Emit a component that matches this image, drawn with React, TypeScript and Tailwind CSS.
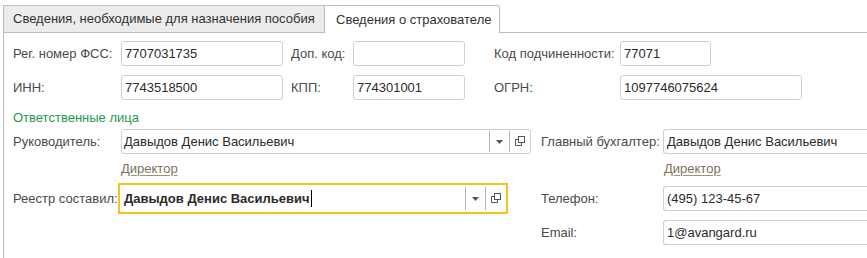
import React from "react";

const font = { fontFamily: '"Liberation Sans", Arial, sans-serif' };

function Field({ value, w, grow }: { value: string; w?: string; grow?: boolean }) {
  return (
    <div
      className={`h-[25px] border border-[#cfcfcf] rounded-[3px] bg-white flex items-center px-[3px] text-[#2b2b2b] whitespace-nowrap overflow-hidden ${
        grow ? "flex-1 rounded-r-none border-r-0" : ""
      } ${w ?? ""}`}
    >
      {value}
    </div>
  );
}

function OpenIcon() {
  return (
    <svg width="11" height="11" viewBox="0 0 11 11" fill="none" stroke="#555" strokeWidth="1">
      <rect x="3.5" y="0.5" width="6" height="6" />
      <path d="M3.5 3.5H0.5V9.5H6.5V6.5" />
    </svg>
  );
}

function Buttons() {
  return (
    <div className="flex h-full items-stretch">
      <div className="w-[20px] border-l border-[#b4b4b4] my-[1px] flex items-center justify-center">
        <svg width="7" height="4" viewBox="0 0 7 4">
          <path d="M0 0H7L3.5 4Z" fill="#555" />
        </svg>
      </div>
      <div className="w-[21px] border-l border-[#b4b4b4] my-[1px] flex items-center justify-center">
        <OpenIcon />
      </div>
    </div>
  );
}

function Label({ text, w }: { text: string; w: string }) {
  return <div className={`${w} shrink-0 text-[#4a4a4a] whitespace-nowrap`}>{text}</div>;
}

function Link({ text }: { text: string }) {
  return <span className="text-[#7b7260] underline underline-offset-2 decoration-[#9a917f]">{text}</span>;
}

export default function App() {
  return (
    <div className="w-[867px] h-[258px] bg-white overflow-hidden text-[13px] leading-[16px]" style={font}>
      {/* tabs */}
      <div className="flex pt-[5px] pl-[3px]">
        <div className="w-[322px] h-[28px] bg-[#ececec] border border-[#bdbdbd] flex items-center pl-[9px] text-[#333] whitespace-nowrap">
          Сведения, необходимые для назначения пособия
        </div>
        <div className="w-[175px] h-[28px] bg-white border border-l-0 border-b-0 border-[#bdbdbd] rounded-tr-[3px] flex items-center pl-[11px] text-[#333] whitespace-nowrap">
          Сведения о страхователе
        </div>
        <div className="flex-1 h-[28px] border-b border-[#bdbdbd]" />
      </div>

      {/* panel */}
      <div className="ml-[3px] h-[226px] border-l border-[#bdbdbd] pl-[9px] pt-[8px]">
        <div className="flex items-center">
          <Label text="Рег. номер ФСС:" w="w-[108px]" />
          <Field value="7707031735" w="w-[162px]" />
          <div className="w-[8px]" />
          <Label text="Доп. код:" w="w-[62px]" />
          <Field value="" w="w-[112px]" />
          <div className="w-[29px]" />
          <Label text="Код подчиненности:" w="w-[126px]" />
          <Field value="77071" w="w-[91px]" />
        </div>
        <div className="flex items-center mt-[9px]">
          <Label text="ИНН:" w="w-[108px]" />
          <Field value="7743518500" w="w-[162px]" />
          <div className="w-[8px]" />
          <Label text="КПП:" w="w-[62px]" />
          <Field value="774301001" w="w-[112px]" />
          <div className="w-[29px]" />
          <Label text="ОГРН:" w="w-[126px]" />
          <Field value="1097746075624" w="w-[182px]" />
        </div>

        <div className="mt-[10px] h-[19px] text-[#1e9a4d]">Ответственные лица</div>

        <div className="flex">
          {/* left column */}
          <div className="w-[528px] shrink-0">
            <div className="flex items-center">
              <Label text="Руководитель:" w="w-[108px]" />
              <div className="w-[410px] h-[25px] border border-[#cfcfcf] rounded-[3px] flex items-center">
                <div className="flex-1 px-[2px] text-[#2b2b2b] whitespace-nowrap">Давыдов Денис Васильевич</div>
                <Buttons />
              </div>
            </div>
            <div className="h-[29px] flex items-center pl-[108px]">
              <Link text="Директор" />
            </div>
            <div className="flex items-center">
              <Label text="Реестр составил:" w="w-[105px]" />
              <div className="w-[390px] h-[31px] border-2 border-[#f4c31c] flex items-center">
                <div className="flex-1 pl-[4px] font-bold text-[#2b2b2b] whitespace-nowrap flex items-center">
                  Давыдов Денис Васильевич
                  <span className="inline-block w-[1px] h-[17px] bg-black ml-[1px]" />
                </div>
                <div className="h-[25px]">
                  <Buttons />
                </div>
              </div>
            </div>
          </div>

          {/* right column */}
          <div className="flex-1">
            <div className="flex items-center">
              <Label text="Главный бухгалтер:" w="w-[122px]" />
              <Field value="Давыдов Денис Васильевич" grow />
            </div>
            <div className="h-[29px] flex items-center pl-[123px]">
              <Link text="Директор" />
            </div>
            <div className="flex items-center mt-[3px]">
              <Label text="Телефон:" w="w-[122px]" />
              <Field value="(495) 123-45-67" grow />
            </div>
            <div className="flex items-center mt-[9px]">
              <Label text="Email:" w="w-[122px]" />
              <Field value="1@avangard.ru" grow />
            </div>
          </div>
        </div>
      </div>
    </div>
  );
}
